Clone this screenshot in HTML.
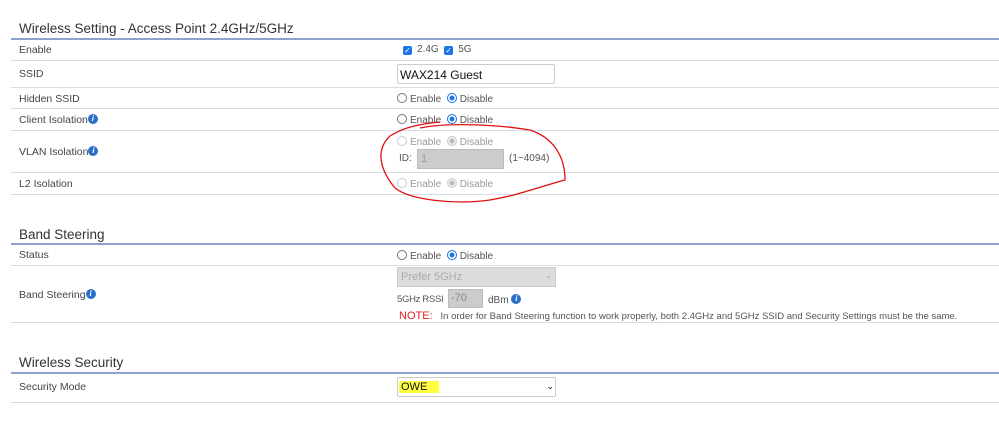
<!DOCTYPE html>
<html><head><style>
body{margin:0;width:999px;height:436px;background:#fff;font-family:"Liberation Sans",sans-serif;position:relative;overflow:hidden;color:#333}
.a{position:absolute;white-space:nowrap}
.t{font-size:13.5px;color:#333;left:19px}
.hl{position:absolute;left:11px;right:0;height:2px;background:#8ea2cf}
.sl{position:absolute;left:11px;right:0;height:1px;background:#d5dde8}
.l{font-size:10.5px;left:19px;color:#444}
.v{font-size:10px;color:#555}
.r{display:inline-block;width:8px;height:8px;border:1px solid #777;border-radius:50%;vertical-align:-1px;margin-right:3px;box-sizing:content-box}
.r.on{border-color:#1a73e8;background:radial-gradient(#1a73e8 40%,#fff 45%)}
.r.d{border-color:#ccc}
.r.dd{border-color:#ccc;background:radial-gradient(#bbb 40%,#eee 45%)}
.cb{display:inline-block;width:9px;height:9px;background:#1a73e8;border-radius:2px;color:#fff;font-size:8px;line-height:9px;text-align:center;vertical-align:-1px;margin-right:5px}
.i{display:inline-block;width:10px;height:10px;border-radius:50%;background:#2a6fc9;color:#fff;font-size:8px;line-height:10px;text-align:center;font-style:italic;font-weight:bold;vertical-align:2px}
.g{color:#999}
</style></head><body>
<div class="a t" style="top:21px">Wireless Setting - Access Point 2.4GHz/5GHz</div>
<div class="hl" style="top:38px"></div>
<div class="a l" style="top:44px">Enable</div>
<div class="a v" style="left:403px;top:44px"><span class="cb">✓</span>2.4G &nbsp;<span class="cb">✓</span>5G</div>
<div class="sl" style="top:60px"></div>
<div class="a l" style="top:68px">SSID</div>
<div class="a" style="left:397px;top:64px;width:158px;height:20px;border:1px solid #ccc;border-radius:2px;box-sizing:border-box;font-size:12px;color:#111;padding:3px 2px">WAX214 Guest</div>
<div class="sl" style="top:87px"></div>
<div class="a l" style="top:93px">Hidden SSID</div>
<div class="a v" style="left:397px;top:93px"><span class="r"></span>Enable &nbsp;<span class="r on"></span>Disable</div>
<div class="sl" style="top:108px"></div>
<div class="a l" style="top:114px">Client Isolation<span class="i">i</span></div>
<div class="a v" style="left:397px;top:114px"><span class="r"></span>Enable &nbsp;<span class="r on"></span>Disable</div>
<div class="sl" style="top:130px"></div>
<div class="a l" style="top:146px">VLAN Isolation<span class="i">i</span></div>
<div class="a v g" style="left:397px;top:136px"><span class="r d"></span>Enable &nbsp;<span class="r dd"></span>Disable</div>
<div class="a v" style="left:399px;top:153px">ID:</div>
<div class="a" style="left:417px;top:149px;width:87px;height:20px;background:#ccc;border:1px solid #bbb;box-sizing:border-box;font-size:11px;color:#999;padding:3px 3px">1</div>
<div class="a v" style="left:509px;top:153px">(1~4094)</div>
<div class="sl" style="top:172px"></div>
<div class="a l" style="top:178px">L2 Isolation</div>
<div class="a v g" style="left:397px;top:178px"><span class="r d"></span>Enable &nbsp;<span class="r dd"></span>Disable</div>
<div class="sl" style="top:194px"></div>
<svg class="a" style="left:0;top:0" width="999" height="436"><path d="M420 128 C450 122 500 125 530 130 C560 140 565 165 565 180 C545 185 520 195 490 200 C455 205 410 200 395 188 C380 170 375 150 390 136 C400 130 410 125 440 122" fill="none" stroke="#e01010" stroke-width="1.3"/></svg>

<div class="a t" style="top:227px">Band Steering</div>
<div class="hl" style="top:243px"></div>
<div class="a l" style="top:249px">Status</div>
<div class="a v" style="left:397px;top:250px"><span class="r"></span>Enable &nbsp;<span class="r on"></span>Disable</div>
<div class="sl" style="top:265px"></div>
<div class="a" style="left:397px;top:267px;width:159px;height:20px;background:#ddd;border:1px solid #ccc;box-sizing:border-box;font-size:11px;color:#aaa;padding:3px 3px">Prefer 5GHz<span style="float:right;font-size:8px">⌄</span></div>
<div class="a l" style="top:289px">Band Steering<span class="i">i</span></div>
<div class="a v" style="left:397px;top:294px;font-size:9.5px;letter-spacing:-0.3px">5GHz RSSI</div>
<div class="a" style="left:448px;top:289px;width:35px;height:19px;background:#ccc;border:1px solid #bbb;box-sizing:border-box;font-size:11px;color:#888;padding:2px 2px">-70</div>
<div class="a v" style="left:488px;top:294px">dBm <span class="i">i</span></div>
<div class="a v" style="left:399px;top:310px;font-size:9.5px"><span style="color:#e02020;font-size:11px">NOTE:</span>&nbsp;&nbsp; In order for Band Steering function to work properly, both 2.4GHz and 5GHz SSID and Security Settings must be the same.</div>
<div class="sl" style="top:322px"></div>

<div class="a t" style="top:355px">Wireless Security</div>
<div class="hl" style="top:372px"></div>
<div class="a l" style="top:381px">Security Mode</div>
<div class="a" style="left:397px;top:377px;width:159px;height:20px;border:1px solid #ccc;border-radius:2px;box-sizing:border-box;font-size:11px;color:#111;padding:3px 1px"><span style="background:#ffff40;padding:0 12px 0 2px">OWE</span><span style="float:right;font-size:9px">⌄</span></div>
<div class="sl" style="top:402px"></div>
</body></html>
